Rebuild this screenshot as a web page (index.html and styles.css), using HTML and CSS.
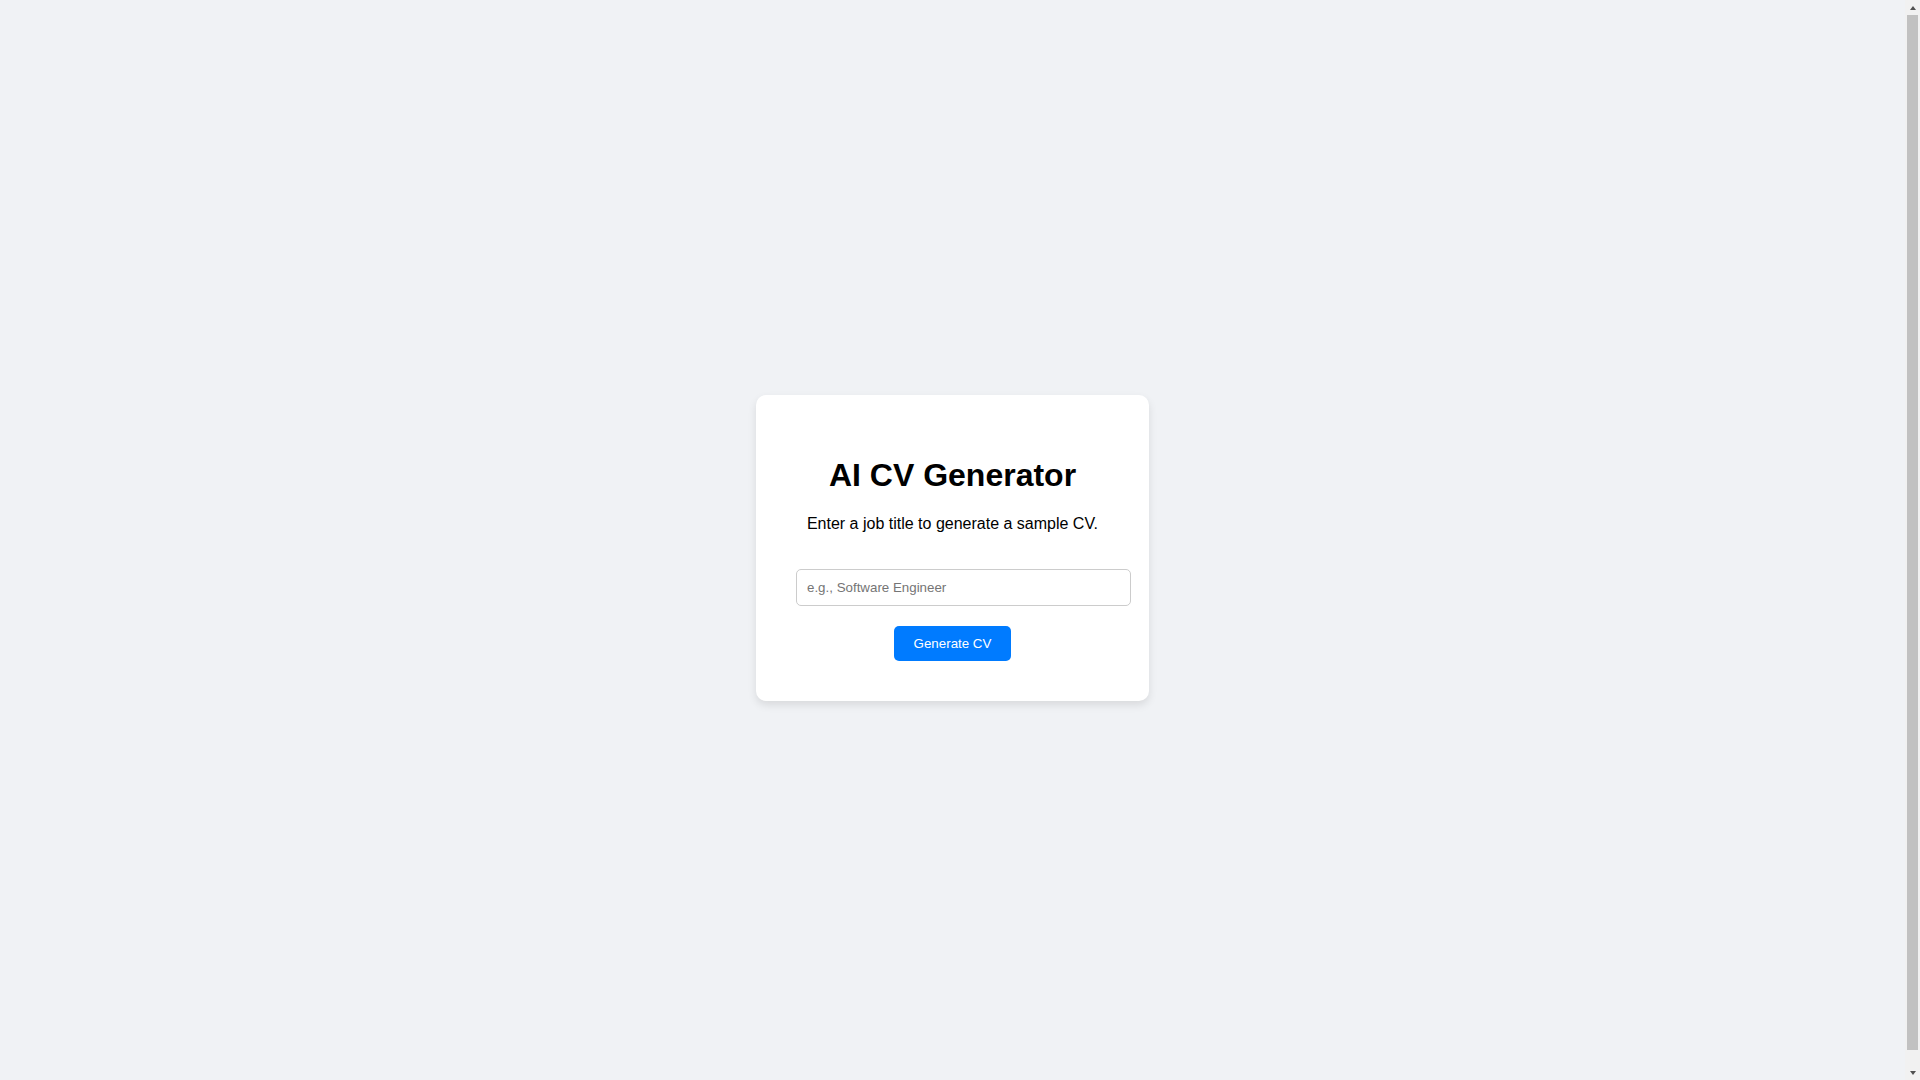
FILE: index.html
```html
<!DOCTYPE html>
<html lang="en">
<head>
<meta charset="UTF-8">
<title>AI CV Generator</title>
<link rel="stylesheet" href="styles.css">
</head>
<body>
  <div class="card">
    <h1 class="title">AI CV Generator</h1>
    <p class="subtitle">Enter a job title to generate a sample CV.</p>
    <input class="job-input" type="text" placeholder="e.g., Software Engineer">
    <button class="generate-btn" type="button">Generate CV</button>
  </div>
  <div class="scrollbar" aria-hidden="true">
    <span class="sb-arrow sb-up"></span>
    <span class="sb-thumb"></span>
    <span class="sb-arrow sb-down"></span>
  </div>
</body>
</html>
```

FILE: styles.css
```css
html {
  background: #f0f2f5;
}

body {
  font-family: "Liberation Sans", Arial, sans-serif;
  background: #f0f2f5;
  display: flex;
  justify-content: center;
  align-items: center;
  height: 100vh;
  margin: 8px 23px 8px 8px;
}

.card {
  background: #ffffff;
  width: 313px;
  padding: 40px;
  border-radius: 10px;
  box-shadow: 0 4px 8px rgba(0, 0, 0, 0.1);
  text-align: center;
}

.title {
  font-size: 32px;
  font-weight: bold;
  margin: 21.44px 0;
  color: #000;
}

.subtitle {
  font-size: 16px;
  margin: 16px 0;
  color: #000;
}

.job-input {
  font-family: "Liberation Sans", Arial, sans-serif;
  font-size: 13.333px;
  width: 100%;
  padding: 10px;
  margin: 20px 0;
  border: 1px solid #cccccc;
  border-radius: 5px;
  box-sizing: content-box;
  display: inline-block;
  vertical-align: top;
  color: #000;
  background: #fff;
}

.job-input::placeholder {
  color: #757575;
}

.generate-btn {
  font-family: "Liberation Sans", Arial, sans-serif;
  font-size: 13.333px;
  padding: 10px 20px;
  border: none;
  border-radius: 5px;
  background: #007bff;
  color: #ffffff;
  cursor: pointer;
  vertical-align: top;
}

/* decorative classic scrollbar overlay */
.scrollbar {
  position: fixed;
  top: 0;
  right: 0;
  width: 15px;
  height: 100vh;
  background: #f1f1f1;
  display: flex;
  flex-direction: column;
  align-items: center;
}

.sb-arrow {
  flex: 0 0 15px;
  width: 15px;
  display: flex;
  align-items: center;
  justify-content: center;
}

.sb-down {
  margin-top: auto;
}

.sb-arrow::after {
  content: "";
  width: 0;
  height: 0;
  border-left: 3.5px solid transparent;
  border-right: 3.5px solid transparent;
}

.sb-up::after {
  border-bottom: 4px solid #505050;
}

.sb-down::after {
  border-top: 4px solid #505050;
}

.sb-thumb {
  flex: 0 0 1035px;
  width: 11px;
  background: #c1c1c1;
}
```
